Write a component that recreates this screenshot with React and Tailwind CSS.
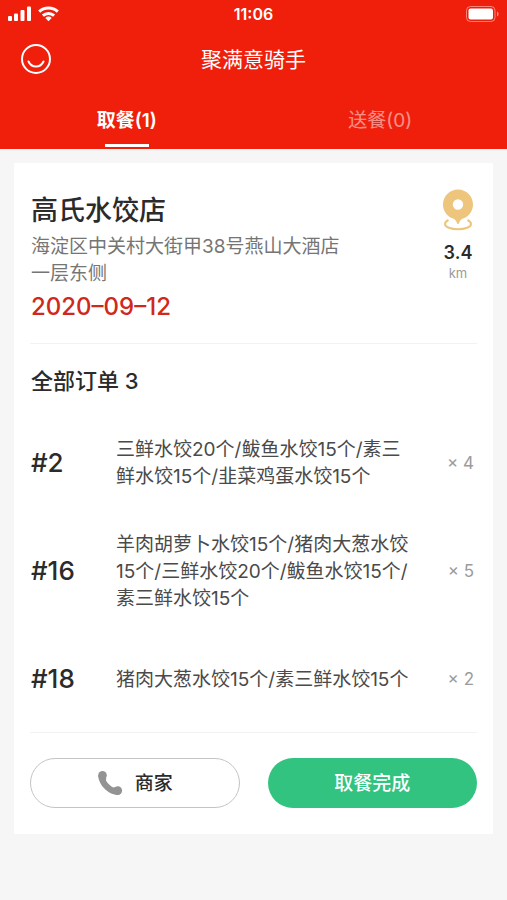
import { useState } from 'react';

const orders = [
  { id: 2, items: '三鲜水饺20个/鲅鱼水饺15个/素三鲜水饺15个/韭菜鸡蛋水饺15个', count: 4 },
  { id: 16, items: '羊肉胡萝卜水饺15个/猪肉大葱水饺15个/三鲜水饺20个/鲅鱼水饺15个/素三鲜水饺15个', count: 5 },
  { id: 18, items: '猪肉大葱水饺15个/素三鲜水饺15个', count: 2 },
];

const tabs = [
  { key: 'pickup', label: '取餐(1)' },
  { key: 'deliver', label: '送餐(0)' },
];

function StatusBar() {
  return (
    <div className="grid grid-cols-3 items-center h-7 px-2 text-white">
      <div className="flex items-center gap-1.5">
        <svg width="24" height="16" viewBox="0 0 24 16" fill="currentColor">
          <rect x="0" y="10" width="4" height="5" rx="1" />
          <rect x="6" y="7.500" width="4" height="7.500" rx="1" />
          <rect x="12.500" y="4" width="4" height="11" rx="1" />
          <rect x="19" y="0.500" width="4" height="14.500" rx="1" />
        </svg>
        <svg width="21" height="16" viewBox="0 0 21 16" fill="none" stroke="currentColor" strokeWidth="3">
          <path d="M1.200 5.700a13.500 13.500 0 0 1 18.600 0" />
          <path d="M4.900 9.700a8.200 8.200 0 0 1 11.200 0" />
          <path d="M10.500 15.200l-3.200-3.300a4.600 4.600 0 0 1 6.400 0z" fill="currentColor" stroke="none" />
        </svg>
      </div>
      <span className="text-center text-base font-semibold">11:06</span>
      <svg className="justify-self-end" width="33" height="16" viewBox="0 0 33 16" fill="none">
        <rect x="0.500" y="0.500" width="28.500" height="15" rx="4" stroke="#fff" strokeOpacity="0.45" />
        <rect x="2.500" y="2.500" width="24.500" height="11" rx="2" fill="#fff" />
        <path d="M31 5.500v5c1-.4 1.600-1.400 1.600-2.500S32 5.900 31 5.500z" fill="#fff" fillOpacity="0.5" />
      </svg>
    </div>
  );
}

function PinIcon() {
  return (
    <svg width="32" height="42" viewBox="0 0 32 42" fill="none">
      <path
        fillRule="evenodd"
        clipRule="evenodd"
        d="M16 0.500C7.700 0.500 1 7.200 1 15.500c0 6.500 4.200 12 10 14.100 1.600.7 2.600 1.600 3.200 2.700l1 2.200c.3.800 1.300.8 1.600 0l1-2.200c.6-1.100 1.600-2 3.200-2.700 5.800-2.100 10-7.600 10-14.100C31 7.200 24.300.500 16 .5zM16 10.300a5.200 5.200 0 1 1 0 10.400 5.200 5.200 0 0 1 0-10.400z"
        fill="#edc57d"
      />
      <path d="M6.500 31C4.300 32 3 33.400 3 34.900c0 3.200 5.800 5.400 13 5.400s13-2.200 13-5.400c0-1.500-1.300-2.900-3.500-3.900" stroke="#edc57d" strokeWidth="2" />
    </svg>
  );
}

function PhoneIcon() {
  return (
    <svg width="26" height="26" viewBox="0 0 26 26" fill="#939393">
      <circle cx="5.500" cy="5.300" r="4.300" />
      <circle cx="20.800" cy="20.600" r="4.300" />
      <path d="M1.200 5.500C1.500 14.500 10.500 24.300 20.500 24.900h1.500L18 17.100c-1.200.5-2.100.3-3.200-.4-2-1.300-4-3.200-5.200-5.200-.7-1.200-.8-2.200-.2-3.600z" />
    </svg>
  );
}

function OrderRow({ order }) {
  return (
    <li className="flex items-center min-h-27">
      <span className="w-[85px] shrink-0 text-[26px] font-medium text-[#2b2b2b]">#{order.id}</span>
      <p className="w-[300px] pt-0.5 text-[19px] leading-[27px] text-[#4a4a4a]">{order.items}</p>
      <span className="ml-auto pt-1 pr-0.5 text-[17px] text-[#9b9b9b] whitespace-nowrap">× {order.count}</span>
    </li>
  );
}

export default function App() {
  const [active, setActive] = useState('pickup');

  return (
    <div lang="zh-CN" className="min-h-screen bg-[#f6f6f6] font-['Inter','Noto_Sans_CJK_SC',sans-serif]">
      <header className="bg-[#f01f0c]">
        <StatusBar />
        <div className="grid grid-cols-[32px_1fr_32px] items-center h-[62px] px-5">
          <button aria-label="我的" className="text-white">
            <svg width="32" height="32" viewBox="0 0 32 32" fill="none" stroke="currentColor" strokeWidth="2">
              <circle cx="16" cy="16" r="14" />
              <path d="M8.500 18.500c1.500 3.300 4.300 5 7.500 5s6-1.700 7.500-5" strokeLinecap="round" />
            </svg>
          </button>
          <h1 className="pt-0.5 text-center text-[21px] text-white">聚满意骑手</h1>
        </div>
        <nav className="grid grid-cols-2 h-[59px]">
          {tabs.map(t => (
            <button
              key={t.key}
              onClick={() => setActive(t.key)}
              className={`flex flex-col items-center justify-between pt-[17px] pb-0.5 text-[19px] leading-7 text-white ${active === t.key ? 'font-semibold' : ''}`}
            >
              <span className={active === t.key ? '' : 'opacity-50'}>{t.label}</span>
              {active === t.key && <span className="w-11 h-[3px] bg-white"></span>}
            </button>
          ))}
        </nav>
      </header>

      <main className="p-3.5">
        <section className="bg-white px-4 pb-[26px]">
          <div className="flex justify-between pt-[26px] pb-[18px] px-px border-b border-[#f2f2f2]">
            <div>
              <h2 className="text-[27px] leading-11 font-medium text-[#2b2b2b]">高氏水饺店</h2>
              <p className="w-[310px] text-[19px] leading-[27px] text-[#757575]">海淀区中关村大街甲38号燕山大酒店一层东侧</p>
              <p className="mt-0.5 text-2xl leading-9 font-medium text-[#d0281b]">2020–09–12</p>
            </div>
            <div className="flex flex-col items-center pr-0.5">
              <PinIcon />
              <span className="mt-2.5 text-lg leading-6 font-semibold text-[#2b2b2b]">3.4</span>
              <span className="text-[13px] leading-4 text-[#9b9b9b]">km</span>
            </div>
          </div>

          <div className="px-px border-b border-[#f2f2f2]">
            <h3 className="pt-[21px] pb-[11px] text-[22px] leading-8 font-medium text-[#2b2b2b]">全部订单 3</h3>
            <ul>
              {orders.map(o => <OrderRow key={o.id} order={o} />)}
            </ul>
          </div>

          <div className="grid grid-cols-2 gap-7 pt-[25px]">
            <button className="flex items-center justify-center gap-3 h-[50px] rounded-full border border-[#c4c4c4] text-[19px] font-medium text-[#2b2b2b]">
              <PhoneIcon />
              <span className="pt-0.5">商家</span>
            </button>
            <button className="h-[50px] pt-0.5 rounded-full bg-[#32c380] text-[19px] font-medium text-white">取餐完成</button>
          </div>
        </section>
      </main>
    </div>
  );
}
